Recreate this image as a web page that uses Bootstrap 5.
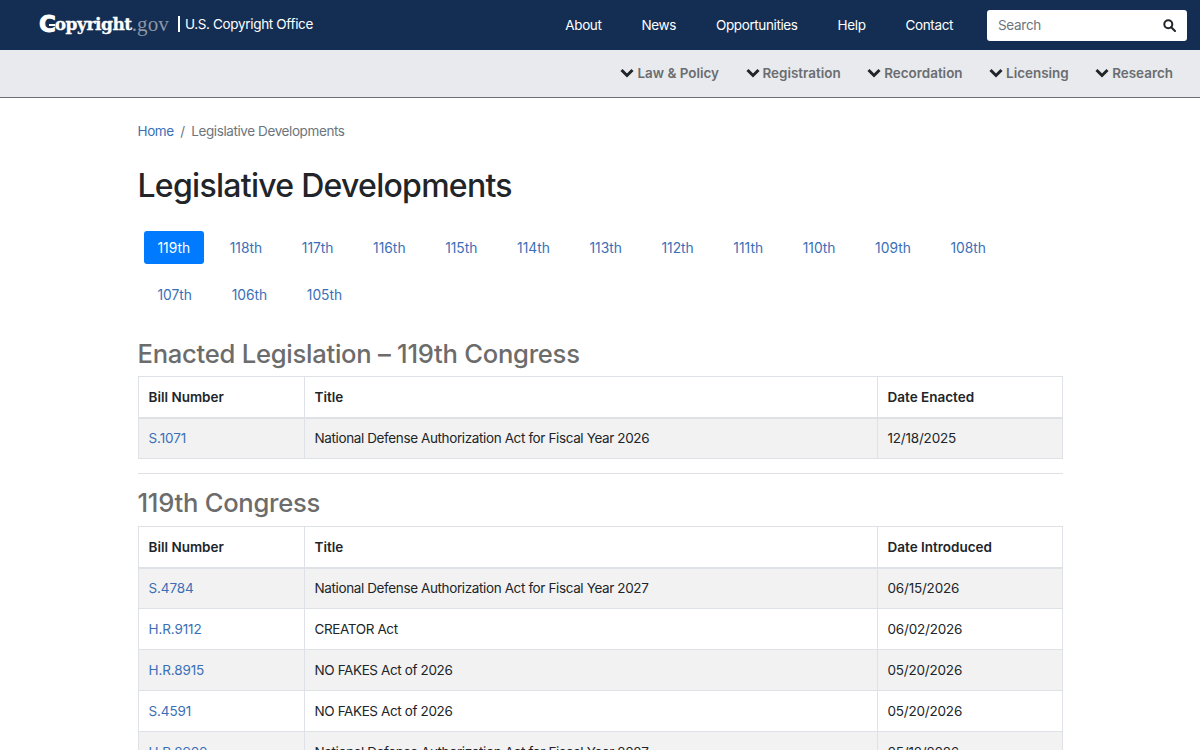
<!DOCTYPE html>
<html lang="en"><head><meta charset="utf-8"><title>Legislative Developments</title>
<link href="https://cdn.jsdelivr.net/npm/bootstrap@5.3.0/dist/css/bootstrap.min.css" rel="stylesheet">
<style>
html,body{height:750px;overflow:hidden}
body{font-family:Inter,"Noto Sans",sans-serif;font-size:13.5px;letter-spacing:-.38px;color:#212529;background:#fff}
a{text-decoration:none;color:#3a6fb7}
.top-bar{background:#142e53;height:50px;padding:0 13px 0 39px}
.logo-mark{font-family:"DejaVu Serif",serif;font-weight:700;font-size:17px;color:#fff;letter-spacing:-.45px;line-height:1;margin-top:-2px;-webkit-text-stroke:.3px #fff}
.logo-c{font-family:"DejaVu Sans",sans-serif;font-size:23px;letter-spacing:-1.2px;-webkit-text-stroke:.9px #fff;position:relative}
.logo-c::after{content:"";position:absolute;left:10px;top:11px;width:6px;height:2px;background:#fff}
.logo-gov{font-family:"Liberation Serif",serif;font-weight:400;font-size:21px;color:#8c96a5;letter-spacing:.1px;-webkit-text-stroke:0}
.logo-office{color:#fff;font-size:13.5px;letter-spacing:-.33px;border-left:2px solid #fff;margin-left:9px;padding-left:5px;line-height:16px;margin-top:-3px}
.top-links{gap:40px;margin-right:34px}
.top-links a{color:#fff;letter-spacing:-.38px}
.search-box{width:200px;height:31px;border-radius:3px;padding:0 11px;color:#6c757d;letter-spacing:-.3px}
.sub-bar{background:#e8eaed;height:48px;border-bottom:1px solid #6b6f73;padding-right:27px;gap:26.5px}
.sub-bar a{color:#6a6d70;font-weight:600;font-size:13.45px;letter-spacing:0;display:flex;align-items:center;gap:3px}
.page-wrap{width:925px;margin-left:137.5px}
.crumbs{padding-top:25px;height:68px;color:#6c757d;line-height:17px;letter-spacing:-.4px}
.crumbs span{padding:0 6.5px}
h1.page-title{font-size:32px;font-weight:500;margin:0;line-height:40px;height:65px;letter-spacing:-.72px}
.congress-pills{display:flex;flex-wrap:wrap;align-content:flex-start;gap:14px 0;padding-left:6.5px;height:109px}
.congress-pills a{height:33px;line-height:34px;padding:0 13.5px;margin-right:12.6px;border-radius:3px;font-size:13.8px;letter-spacing:0}
.congress-pills a.is-on{background:#007bff;color:#fff}
h2.sect{font-size:25.6px;font-weight:500;color:#6c6c6c;margin:0;line-height:28px;letter-spacing:-.26px}
.bills{width:925px;table-layout:fixed;margin:8px 0 0;--bs-table-striped-bg:#f2f2f2;--bs-table-striped-color:#212529;border-color:#dee2e6}
.bills th,.bills td{padding:0 10px;height:41px;vertical-align:middle;font-size:13.5px;line-height:20px}
.bills td a{letter-spacing:-.12px}
.bills td:last-child{letter-spacing:-.2px}
.bills thead th{border-bottom:2px solid #dee2e6;font-weight:600;height:41px;letter-spacing:0}
.sep{border:0;border-top:1px solid #dee2e6;margin:14px 0 15px;opacity:1}
.sep + h2 + .bills{margin-top:9px}
.c1{width:166px}.c3{width:185px}
</style></head>
<body>
<header class="top-bar d-flex align-items-center">
  <a href="#" class="logo-mark d-flex align-items-center"><span class="logo-c">C</span>opyright<span class="logo-gov">.gov</span></a>
  <span class="logo-office">U.S. Copyright Office</span>
  <nav class="top-links d-flex ms-auto"><a href="#">About</a><a href="#">News</a><a href="#">Opportunities</a><a href="#">Help</a><a href="#">Contact</a></nav>
  <div class="search-box bg-white d-flex align-items-center justify-content-between"><span>Search</span>
    <svg width="13" height="13" viewBox="0 0 13 13" fill="none" stroke="#212529" stroke-width="2"><circle cx="5.3" cy="5.3" r="4"/><path d="M8.2 8.2L12 12" stroke-linecap="round"/></svg></div>
</header>
<nav class="sub-bar d-flex align-items-center justify-content-end">
  <a href="#"><svg width="14" height="10" viewBox="0 0 14 10" fill="none" stroke="#212529" stroke-width="3"><path d="M1.5 2L7 7.5L12.5 2"/></svg>Law &amp; Policy</a>
  <a href="#"><svg width="14" height="10" viewBox="0 0 14 10" fill="none" stroke="#212529" stroke-width="3"><path d="M1.5 2L7 7.5L12.5 2"/></svg>Registration</a>
  <a href="#"><svg width="14" height="10" viewBox="0 0 14 10" fill="none" stroke="#212529" stroke-width="3"><path d="M1.5 2L7 7.5L12.5 2"/></svg>Recordation</a>
  <a href="#"><svg width="14" height="10" viewBox="0 0 14 10" fill="none" stroke="#212529" stroke-width="3"><path d="M1.5 2L7 7.5L12.5 2"/></svg>Licensing</a>
  <a href="#"><svg width="14" height="10" viewBox="0 0 14 10" fill="none" stroke="#212529" stroke-width="3"><path d="M1.5 2L7 7.5L12.5 2"/></svg>Research</a>
</nav>
<main class="page-wrap">
  <div class="crumbs"><a href="#">Home</a><span>/</span>Legislative Developments</div>
  <h1 class="page-title">Legislative Developments</h1>
  <div class="congress-pills"><a href="#" class="is-on">119th</a><a href="#">118th</a><a href="#">117th</a><a href="#">116th</a><a href="#">115th</a><a href="#">114th</a><a href="#">113th</a><a href="#">112th</a><a href="#">111th</a><a href="#">110th</a><a href="#">109th</a><a href="#">108th</a><a href="#">107th</a><a href="#">106th</a><a href="#">105th</a></div>
  <h2 class="sect">Enacted Legislation – 119th Congress</h2>
  <table class="table table-bordered table-striped bills">
    <thead><tr><th class="c1">Bill Number</th><th>Title</th><th class="c3">Date Enacted</th></tr></thead>
    <tbody><tr><td><a href="#">S.1071</a></td><td>National Defense Authorization Act for Fiscal Year 2026</td><td>12/18/2025</td></tr></tbody>
  </table>
  <hr class="sep">
  <h2 class="sect">119th Congress</h2>
  <table class="table table-bordered table-striped bills">
    <thead><tr><th class="c1">Bill Number</th><th>Title</th><th class="c3">Date Introduced</th></tr></thead>
    <tbody>
      <tr><td><a href="#">S.4784</a></td><td>National Defense Authorization Act for Fiscal Year 2027</td><td>06/15/2026</td></tr>
      <tr><td><a href="#">H.R.9112</a></td><td>CREATOR Act</td><td>06/02/2026</td></tr>
      <tr><td><a href="#">H.R.8915</a></td><td>NO FAKES Act of 2026</td><td>05/20/2026</td></tr>
      <tr><td><a href="#">S.4591</a></td><td>NO FAKES Act of 2026</td><td>05/20/2026</td></tr>
      <tr><td><a href="#">H.R.8900</a></td><td>National Defense Authorization Act for Fiscal Year 2027</td><td>05/12/2026</td></tr>
    </tbody>
  </table>
</main>
<script src="https://cdn.jsdelivr.net/npm/bootstrap@5.3.0/dist/js/bootstrap.bundle.min.js"></script>
</body></html>
